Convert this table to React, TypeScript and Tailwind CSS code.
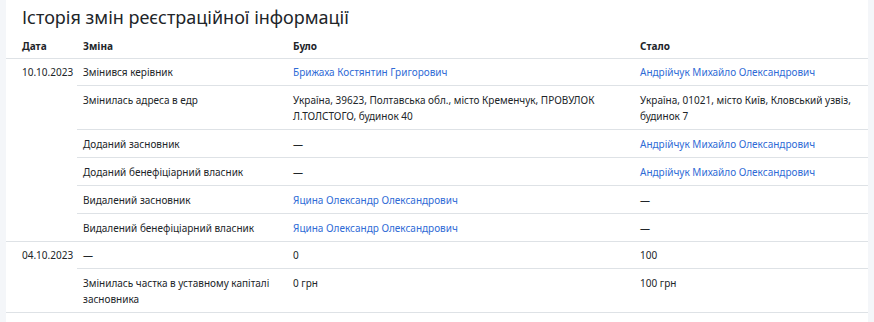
import React from 'react';

type Cell = { text: string; link?: boolean };
type Change = { what: string; before: Cell; after: Cell };
type Group = { date: string; changes: Change[] };

const dash: Cell = { text: '—' };

const history: Group[] = [
  {
    date: '10.10.2023',
    changes: [
      { what: 'Змінився керівник', before: { text: 'Брижаха Костянтин Григорович', link: true }, after: { text: 'Андрійчук Михайло Олександрович', link: true } },
      {
        what: 'Змінилась адреса в едр',
        before: { text: 'Україна, 39623, Полтавська обл., місто Кременчук, ПРОВУЛОК Л.ТОЛСТОГО, будинок 40' },
        after: { text: 'Україна, 01021, місто Київ, Кловський узвіз, будинок 7' },
      },
      { what: 'Доданий засновник', before: dash, after: { text: 'Андрійчук Михайло Олександрович', link: true } },
      { what: 'Доданий бенефіціарний власник', before: dash, after: { text: 'Андрійчук Михайло Олександрович', link: true } },
      { what: 'Видалений засновник', before: { text: 'Яцина Олександр Олександрович', link: true }, after: dash },
      { what: 'Видалений бенефіціарний власник', before: { text: 'Яцина Олександр Олександрович', link: true }, after: dash },
    ],
  },
  {
    date: '04.10.2023',
    changes: [
      { what: '—', before: { text: '0' }, after: { text: '100' } },
      { what: 'Змінилась частка в уставному капіталі засновника', before: { text: '0 грн' }, after: { text: '100 грн' } },
    ],
  },
];

function Value({ cell }: { cell: Cell }) {
  if (cell.link) {
    return (
      <a href="#" className="text-[#2f6bd6] no-underline">
        {cell.text}
      </a>
    );
  }
  return <span>{cell.text}</span>;
}

// first row of a date group sits a touch tighter than the rest
const firstCls = 'px-[6px] pt-[5px] pb-[5px] align-top border-b border-[#dee2e6]';
const cellCls = 'px-[6px] pt-[6px] pb-[5px] align-top border-b border-[#dee2e6]';

export default function App() {
  return (
    <div className="min-h-screen bg-[#f4f6f9] pl-[6px] pr-[6px] font-['Noto_Sans','Open_Sans',sans-serif] text-[#212529]">
      <div className="bg-white min-h-[322px]">
        <h2 className="pl-[16px] pt-[5px] h-[31px] text-[18px] leading-[24px] font-normal text-[#212529]">
          Історія змін реєстраційної інформації
        </h2>
        <table className="w-full table-fixed border-collapse text-[10px] leading-[16px]">
          <colgroup>
            <col className="w-[71px]" />
            <col className="w-[210px]" />
            <col className="w-[347px]" />
            <col />
          </colgroup>
          <thead>
            <tr className="border-b border-[#dee2e6] text-left">
              <th className="pl-[16px] pr-[6px] pt-[7px] pb-[4px] font-bold">Дата</th>
              <th className="px-[6px] pt-[7px] pb-[4px] font-bold">Зміна</th>
              <th className="px-[6px] pt-[7px] pb-[4px] font-bold">Було</th>
              <th className="px-[6px] pt-[7px] pb-[4px] font-bold">Стало</th>
            </tr>
          </thead>
          <tbody>
            {history.map(group =>
              group.changes.map((c, i) => {
                const cls = i === 0 ? firstCls : cellCls;
                return (
                  <tr key={group.date + i}>
                    {i === 0 && (
                      <td
                        rowSpan={group.changes.length}
                        className="pl-[16px] pr-[2px] pt-[5px] pb-[5px] align-top border-b border-[#dee2e6] whitespace-nowrap"
                      >
                        {group.date}
                      </td>
                    )}
                    <td className={cls}>{c.what}</td>
                    <td className={cls}>
                      <Value cell={c.before} />
                    </td>
                    <td className={cls}>
                      <Value cell={c.after} />
                    </td>
                  </tr>
                );
              })
            )}
          </tbody>
        </table>
      </div>
    </div>
  );
}
